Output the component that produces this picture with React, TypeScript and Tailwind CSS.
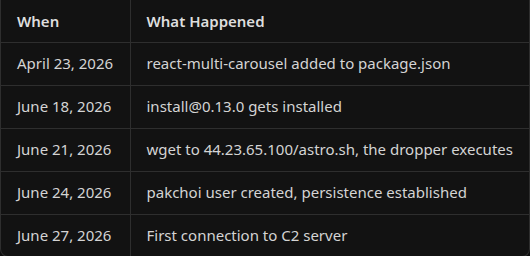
const ROWS = [
  { when: "April 23, 2026", what: "react-multi-carousel added to package.json" },
  { when: "June 18, 2026", what: "install@0.13.0 gets installed" },
  { when: "June 21, 2026", what: "wget to 44.23.65.100/astro.sh, the dropper executes" },
  { when: "June 24, 2026", what: "pakchoi user created, persistence established" },
  { when: "June 27, 2026", what: "First connection to C2 server" },
];

export default function App() {
  return (
    <div className="w-[530px] h-[256px] overflow-hidden bg-[#0d0d0d] font-['Noto_Sans',sans-serif]">
      <div className="border-x border-b border-[#2e2e2e] rounded-b-lg overflow-hidden bg-[#121212]">
        <table className="w-full border-collapse text-[15px]">
          <thead>
            <tr className="h-[42px] border-b border-[#2e2e2e]">
              <th className="w-[129px] border-r border-[#2e2e2e] pl-4 text-left font-semibold text-[#dedede]">
                When
              </th>
              <th className="pl-4 text-left font-semibold text-[#dedede]">What Happened</th>
            </tr>
          </thead>
          <tbody>
            {ROWS.map((row, i) => (
              <tr
                key={row.when}
                className={i < ROWS.length - 1 ? "h-[43px] border-b border-[#2e2e2e]" : "h-[42px]"}
              >
                <td className="border-r border-[#2e2e2e] pl-4 text-[#d4d4d4] whitespace-nowrap">
                  {row.when}
                </td>
                <td className="pl-4 text-[#d4d4d4] whitespace-nowrap">{row.what}</td>
              </tr>
            ))}
          </tbody>
        </table>
      </div>
    </div>
  );
}
